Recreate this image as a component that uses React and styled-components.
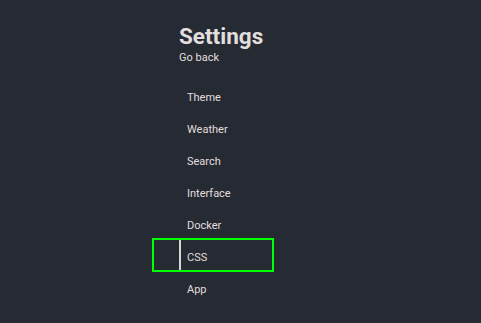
import React from "react";
import styled, { createGlobalStyle } from "styled-components";

const GlobalStyle = createGlobalStyle`
  html, body {
    margin: 0;
    padding: 0;
    background: #262a33;
  }
  body {
    font-family: Roboto, "Liberation Sans", sans-serif;
    color: #e1dede;
  }
`;

const Page = styled.div`
  min-height: 323px;
  box-sizing: border-box;
  padding: 23px 0 0 154px;
  background: #262a33;
`;

const Header = styled.header`
  margin-left: 25px;
  display: flex;
  flex-direction: column;
`;

const Title = styled.h1`
  margin: 0;
  font-size: 22.5px;
  line-height: 27px;
  font-weight: 700;
  color: #e1dede;
`;

const BackLink = styled.a`
  margin-top: 1px;
  font-size: 11px;
  line-height: 14px;
  color: #e1dede;
  text-decoration: none;
  cursor: pointer;
`;

const Nav = styled.nav`
  margin-top: 15px;
  display: flex;
  flex-direction: column;
  gap: 2px;
`;

const NavItem = styled.div`
  width: 118px;
  height: 30px;
  box-sizing: border-box;
  padding-left: 25px;
  outline: ${(p) => (p.$focused ? "2px solid #00ff00" : "none")};
`;

const NavLink = styled.a`
  display: block;
  height: 30px;
  box-sizing: border-box;
  padding: 5px 0 0 6px;
  line-height: 25px;
  font-size: 11px;
  color: #e1dede;
  text-decoration: none;
  border-left: 2px solid ${(p) => (p.$active ? "#d9d6d6" : "transparent")};
  cursor: pointer;
`;

const routes = ["Theme", "Weather", "Search", "Interface", "Docker", "CSS", "App"];

export default function App() {
  const active = "CSS";
  return (
    <>
      <GlobalStyle />
      <Page>
        <Header>
          <Title>Settings</Title>
          <BackLink>Go back</BackLink>
        </Header>
        <Nav>
          {routes.map((name) => (
            <NavItem key={name} $focused={name === active}>
              <NavLink $active={name === active}>{name}</NavLink>
            </NavItem>
          ))}
        </Nav>
      </Page>
    </>
  );
}
